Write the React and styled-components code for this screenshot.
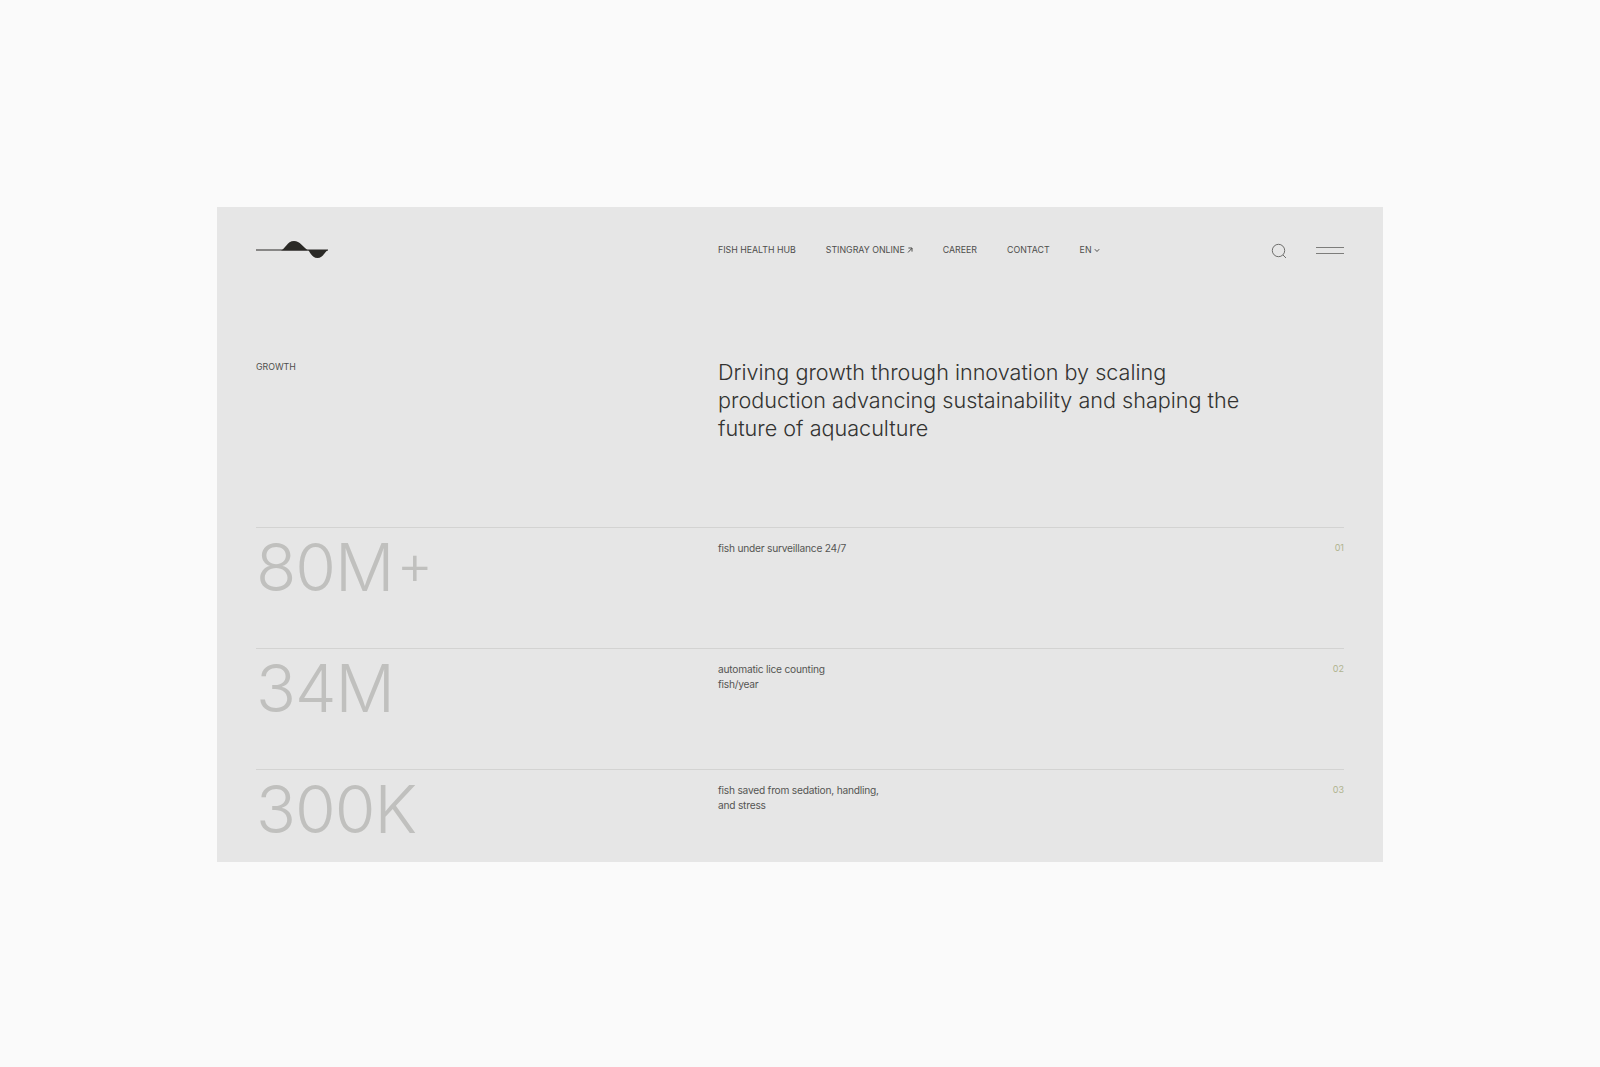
import React from 'react';
import styled, { createGlobalStyle } from 'styled-components';

const Global = createGlobalStyle`
  html, body { margin: 0; padding: 0; background: #fafafa; }
  body { font-family: Inter, "Liberation Sans", sans-serif; -webkit-font-smoothing: antialiased; }
`;

const Page = styled.div`
  height: 1067px;
  padding-top: 207px;
  box-sizing: border-box;
  overflow: hidden;
`;

const Panel = styled.main`
  width: 1166px;
  height: 655px;
  margin: 0 auto;
  padding: 0 39px;
  box-sizing: border-box;
  background: #e6e6e6;
  overflow: hidden;
`;

const Header = styled.header`
  display: grid;
  grid-template-columns: 462px 1fr auto;
  align-items: center;
  height: 88px;
`;

const Logo = styled.svg`
  display: block;
  width: 72px;
  height: 20px;
`;

const Nav = styled.nav`
  display: flex;
  align-items: center;
  gap: 30px;
  margin-bottom: 2px;
`;

const NavLink = styled.a`
  display: flex;
  align-items: center;
  gap: 2px;
  font-size: 8.8px;
  line-height: 12px;
  color: #4e4e4c;
  white-space: nowrap;
`;

const Tools = styled.div`
  display: flex;
  align-items: center;
  gap: 29px;
`;

const Burger = styled.div`
  width: 28px;
  height: 5px;
  margin-bottom: 2px;
  border-top: 1px solid #7d7d7b;
  border-bottom: 1px solid #7d7d7b;
`;

const Intro = styled.section`
  display: grid;
  grid-template-columns: 462px 1fr;
  height: 232px;
  padding-top: 63px;
  box-sizing: border-box;
`;

const Label = styled.div`
  font-size: 8.8px;
  line-height: 12px;
  margin-top: 3px;
  color: #4e4e4c;
`;

const Headline = styled.h1`
  margin: 0;
  width: 540px;
  font-size: 21.6px;
  line-height: 28px;
  font-weight: 300;
  color: #333331;
`;

const Row = styled.section`
  display: grid;
  grid-template-columns: 462px 1fr auto;
  height: 121px;
  box-sizing: border-box;
  border-top: 1px solid #d3d3d2;
`;

const Figure = styled.div`
  font-size: 66px;
  line-height: 78px;
  font-weight: 300;
  letter-spacing: -1px;
  color: #c0c0be;
`;

const Plus = styled.span`
  font-size: 56px;
  line-height: 0;
  vertical-align: 7px;
  margin-left: 3px;
`;

const Caption = styled.p`
  margin: 13px 0 0;
  font-size: 10.2px;
  line-height: 14.6px;
  letter-spacing: -0.22px;
  color: #555553;
`;

const Index = styled.span`
  margin-top: 14px;
  font-size: 9px;
  line-height: 12px;
  color: #b0b48f;
`;

const rows = [
  { figure: '80M', plus: true, caption: ['fish under surveillance 24/7'], index: '01' },
  { figure: '34M', caption: ['automatic lice counting', 'fish/year'], index: '02' },
  { figure: '300K', caption: ['fish saved from sedation, handling,', 'and stress'], index: '03' },
];

const navItems = ['FISH HEALTH HUB', 'STINGRAY ONLINE', 'CAREER', 'CONTACT', 'EN'];

export default function App() {
  return (
    <Page>
      <Global />
      <Panel>
        <Header>
          <Logo viewBox="0 1 72 20">
            <path d="M0 10h72" stroke="#2a2926" strokeWidth="1" fill="none" />
            <path d="M25 10.5C29 9.5 31 1 38 1c6 0 9 6 14 9.5z" fill="#2a2926" />
            <path d="M52 10h20c-3 1.5-5 8-10.5 8S54.5 12.500 52 10z" fill="#2a2926" />
          </Logo>
          <Nav>
            {navItems.map((item) => (
              <NavLink key={item}>
                {item}
                {item === 'STINGRAY ONLINE' && (
                  <svg width="6" height="6" viewBox="0 0 6 6" fill="none" stroke="#4e4e4c" strokeWidth="1">
                    <path d="M1 5.500 5 1.200M1.400 1H5v3.600" />
                  </svg>
                )}
                {item === 'EN' && (
                  <svg width="6" height="5" viewBox="0 0 6 5" fill="none" stroke="#4e4e4c" strokeWidth="1">
                    <path d="M.8 1.200 3 3.500l2.200-2.300" />
                  </svg>
                )}
              </NavLink>
            ))}
          </Nav>
          <Tools>
            <svg width="16" height="16" viewBox="0 0 16 16" fill="none" stroke="#6f6f6d" strokeWidth="1">
              <circle cx="7.5" cy="7.5" r="6.2" />
              <path d="m12 12 3 3" />
            </svg>
            <Burger />
          </Tools>
        </Header>
        <Intro>
          <Label>GROWTH</Label>
          <Headline>Driving growth through innovation by scaling production advancing sustainability and shaping the future of aquaculture</Headline>
        </Intro>
        {rows.map((row) => (
          <Row key={row.index}>
            <Figure>
              {row.figure}
              {row.plus && <Plus>+</Plus>}
            </Figure>
            <Caption>
              {row.caption.map((line) => (
                <React.Fragment key={line}>
                  {line}
                  <br />
                </React.Fragment>
              ))}
            </Caption>
            <Index>{row.index}</Index>
          </Row>
        ))}
      </Panel>
    </Page>
  );
}
